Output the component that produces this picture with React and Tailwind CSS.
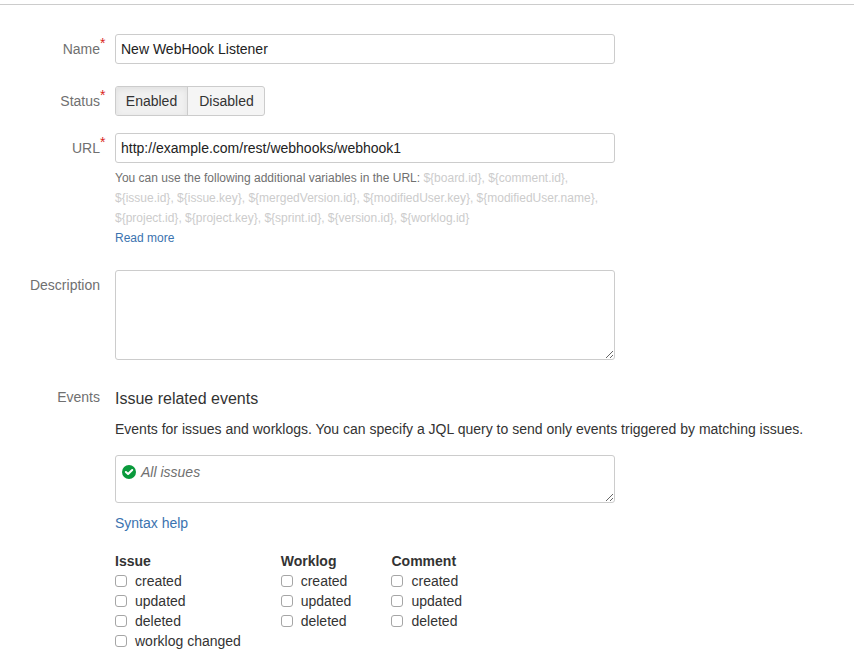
import React from "react";

const eventGroups = [
  { title: "Issue", width: "w-[165.7px]", events: ["created", "updated", "deleted", "worklog changed"] },
  { title: "Worklog", width: "w-[110.8px]", events: ["created", "updated", "deleted"] },
  { title: "Comment", width: "w-[110px]", events: ["created", "updated", "deleted"] },
];

function Row({ label, required, className, labelClass = "", children }) {
  return (
    <div className={`flex ${className}`}>
      <div className={`relative mr-[15px] h-5 w-[100px] shrink-0 text-right text-[#707070] ${labelClass}`}>
        {label}
        {required && <span className="absolute -top-1.5 left-full text-sm text-[#d9261c]">*</span>}
      </div>
      <div className="min-w-0 flex-1">{children}</div>
    </div>
  );
}

function Grip() {
  return (
    <svg className="absolute right-0 bottom-px" width="8" height="8" viewBox="0 0 8 8" shapeRendering="crispEdges" fill="#666">
      {[0, 1, 2, 3, 4, 5, 6].map((i) => (
        <rect key={i} x={i} y={7 - i} width="1" height="1" />
      ))}
      {[0, 1, 2].map((i) => (
        <rect key={i + 7} x={4 + i} y={7 - i} width="1" height="1" />
      ))}
    </svg>
  );
}

const field = "w-[500px] rounded-[3px] border border-[#ccc] bg-white";

export default function App() {
  return (
    <div className="h-[662px] w-[854px] overflow-hidden bg-white pt-1 font-['Liberation_Sans',Arial,sans-serif] text-sm leading-5 text-[#333]">
      <div className="h-px bg-[#ccc]" />

      <Row label="Name" required className="mt-[29px]" labelClass="mt-[5px]">
        <input readOnly value="New WebHook Listener" className={`${field} block h-[30px] px-[5px] text-[#222] outline-none`} />
      </Row>

      <Row label="Status" required className="mt-[22px]" labelClass="mt-[5px]">
        <div className="flex h-[30px] w-[150px] overflow-hidden rounded-[3px] border border-[#ccc] bg-[#f5f5f5]">
          <button className="w-[72px] border-r border-[#ccc] bg-[#f0f0f0] shadow-[inset_0_2px_6px_rgba(0,0,0,0.07)]">Enabled</button>
          <button className="flex-1 pl-px">Disabled</button>
        </div>
      </Row>

      <Row label="URL" required className="mt-[17px]" labelClass="mt-[5px]">
        <input readOnly value="http://example.com/rest/webhooks/webhook1" className={`${field} block h-[30px] px-[5px] text-[#222] outline-none`} />
        <div className="mt-[5px] text-xs leading-5 whitespace-nowrap text-[#707070]">
          <div>
            You can use the following additional variables in the URL: <span className="text-[#ccc]">{"${board.id}, ${comment.id},"}</span>
          </div>
          <div className="text-[#ccc]">{"${issue.id}, ${issue.key}, ${mergedVersion.id}, ${modifiedUser.key}, ${modifiedUser.name},"}</div>
          <div className="text-[#ccc]">{"${project.id}, ${project.key}, ${sprint.id}, ${version.id}, ${worklog.id}"}</div>
          <a className="text-[#3b73af]">Read more</a>
        </div>
      </Row>

      <Row label="Description" className="mt-[22px]" labelClass="mt-[5px]">
        <div className={`${field} relative h-[90px]`}>
          <Grip />
        </div>
      </Row>

      <Row label="Events" className="mt-[27px]">
        <h3 className="mt-0.5 text-base leading-5">Issue related events</h3>
        <p className="mt-2.5 whitespace-nowrap">
          Events for issues and worklogs. You can specify a JQL query to send only events triggered by matching issues.
        </p>
        <div className={`${field} relative mt-4 flex h-12 items-start px-1.5 pt-1.5`}>
          <svg className="mt-[3px] mr-[5px]" width="14" height="14" viewBox="0 0 14 14">
            <circle cx="7" cy="7" r="7" fill="#0a9a3c" />
            <path d="M3.9 7 6.1 9 10.2 5" fill="none" stroke="#fff" strokeWidth="2.1" strokeLinecap="round" strokeLinejoin="round" />
          </svg>
          <span className="text-[#707070] italic">All issues</span>
          <Grip />
        </div>
        <a className="mt-2.5 block text-[#3b73af]">Syntax help</a>
        <div className="mt-[18px] flex">
          {eventGroups.map((group) => (
            <div key={group.title} className={group.width}>
              <div className="font-bold">{group.title}</div>
              {group.events.map((name) => (
                <label key={name} className="flex h-5 items-center whitespace-nowrap">
                  <input type="checkbox" className="mr-2 size-3 appearance-none rounded-[3px] border border-[#a6a6a6] bg-white" />
                  {name}
                </label>
              ))}
            </div>
          ))}
        </div>
      </Row>
    </div>
  );
}
